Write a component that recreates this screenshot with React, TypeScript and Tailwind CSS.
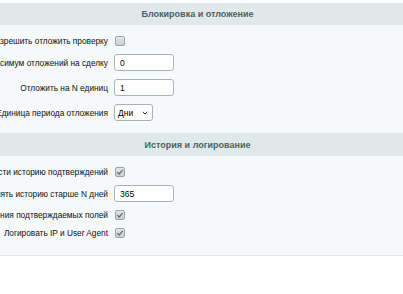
import React from "react";

const font = { fontFamily: '"Liberation Sans", Arial, sans-serif' };

function Checkbox({ checked }: { checked?: boolean }) {
  return (
    <div className="w-[10px] h-[10px] rounded-[2px] border border-[#9aa3a8] bg-gradient-to-b from-[#e4e7e9] to-[#c9cfd2] flex items-center justify-center">
      {checked && (
        <svg width="8" height="8" viewBox="0 0 8 8">
          <path d="M1.3 4.2 L3.1 6 L6.8 1.8" fill="none" stroke="#5d6a70" strokeWidth="1.2" />
        </svg>
      )}
    </div>
  );
}

function Input({ value }: { value: string }) {
  return (
    <div className="w-[60px] h-[17px] rounded-[3px] border border-[#a6b3b8] bg-white flex items-center pl-[5px] text-[8.5px] leading-[10px] text-black">
      {value}
    </div>
  );
}

function Select() {
  return (
    <div className="w-[39px] h-[17px] rounded-[3px] border border-[#a6b3b8] bg-white flex items-center justify-between pl-[3px] pr-[4px] text-[8.5px] leading-[10px] text-black">
      <span>Дни</span>
      <svg width="6" height="4" viewBox="0 0 6 4">
        <path d="M0.7 0.8 L3 3 L5.3 0.8" fill="none" stroke="#333" strokeWidth="1" />
      </svg>
    </div>
  );
}

function Row({ label, children }: { label: string; children: React.ReactNode }) {
  return (
    <div className="flex items-center py-[4px]">
      <div className="w-[108px] shrink-0 flex justify-end">
        <span className="shrink-0 whitespace-nowrap text-[8.3px] leading-[10px] text-[#111]">{label}</span>
      </div>
      <div className="ml-[6px] flex items-center">{children}</div>
    </div>
  );
}

export default function App() {
  return (
    <div className="w-[403px] h-[294px] bg-white overflow-hidden" style={font}>
      <div className="pt-[3px]">
        <div className="h-[22px] bg-[#e1e8ea] flex items-center justify-center pr-[8px]">
          <span className="text-[9px] leading-[10px] font-bold text-[#4c6267] whitespace-nowrap">Блокировка и отложение</span>
        </div>
        <div className="bg-[#f5f9f9] pt-[7px] pb-[8px]">
          <Row label="Разрешить отложить проверку">
            <div className="ml-[1px]"><Checkbox /></div>
          </Row>
          <Row label="Максимум отложений на сделку">
            <Input value="0" />
          </Row>
          <Row label="Отложить на N единиц">
            <Input value="1" />
          </Row>
          <Row label="Единица периода отложения">
            <Select />
          </Row>
        </div>
        <div className="h-[23px] bg-[#e1e8ea] flex items-center justify-center pr-[8px]">
          <span className="text-[9px] leading-[10px] font-bold text-[#4c6267] whitespace-nowrap">История и логирование</span>
        </div>
        <div className="bg-[#f5f9f9] pt-[7px] pb-[13px] border-b border-[#dfe5e7]">
          <Row label="Вести историю подтверждений">
            <div className="ml-[1px]"><Checkbox checked /></div>
          </Row>
          <Row label="Удалять историю старше N дней">
            <Input value="365" />
          </Row>
          <Row label="Хранение значения подтверждаемых полей">
            <div className="ml-[1px]"><Checkbox checked /></div>
          </Row>
          <Row label="Логировать IP и User Agent">
            <div className="ml-[1px]"><Checkbox checked /></div>
          </Row>
        </div>
      </div>
    </div>
  );
}
